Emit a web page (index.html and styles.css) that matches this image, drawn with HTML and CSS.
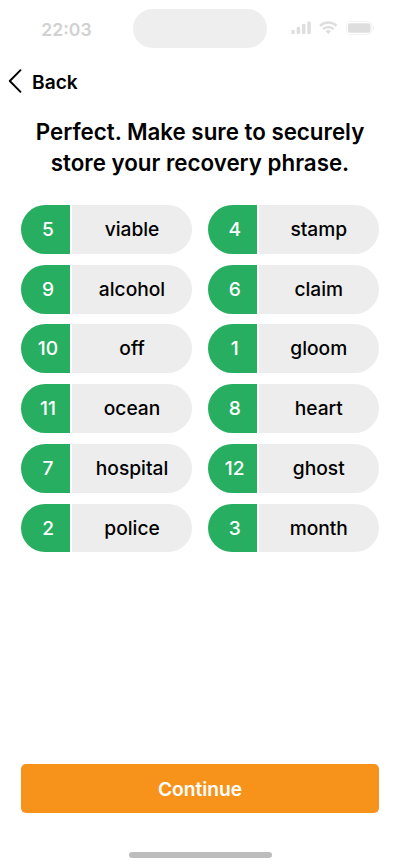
FILE: index.html
```html
<!DOCTYPE html>
<html lang="en">
<head>
<meta charset="utf-8">
<title>Recovery phrase</title>
<link rel="stylesheet" href="styles.css">
</head>
<body>
<div class="screen">
  <header class="status">
    <span class="time">22:03</span>
    <span class="island"></span>
    <svg class="signals" width="84" height="16" viewBox="0 0 84 16" fill="#dedede">
      <rect x="0.3" y="9" width="3.5" height="4" rx="1"/>
      <rect x="5.700" y="6" width="3.500" height="7" rx="1"/>
      <rect x="11" y="3" width="3.500" height="10" rx="1"/>
      <rect x="16.300" y="0.500" width="3.500" height="12.500" rx="1"/>
      <g fill="none" stroke="#dedede" stroke-width="2.400">
        <path d="M29 4.800a12 12 0 0 1 16.600 0"/>
        <path d="M32 8.200a7.700 7.700 0 0 1 10.600 0"/>
      </g>
      <path d="M37.300 13l-2.700-2.800a4 4 0 0 1 5.400 0z"/>
      <rect x="55.300" y="0.500" width="25.500" height="13" rx="3.900" fill="none" stroke="#f3f3f3"/>
      <rect x="57" y="2.300" width="22.500" height="9.500" rx="2.300"/>
      <path d="M81.800 5v4q1.400-.6 1.400-2t-1.400-2" fill="#f0f0f0"/>
    </svg>
  </header>
  <nav class="back">
    <svg width="14" height="26" viewBox="0 0 14 26"><path d="M12.500 1.200L1.800 12L12.500 22.800" fill="none" stroke="#000" stroke-width="1.900" stroke-linecap="round" stroke-linejoin="round"/></svg>
    <span>Back</span>
  </nav>
  <h1>Perfect. Make sure to securely<br>store your recovery phrase.</h1>
  <main class="words">
    <div class="word"><b>5</b><span>viable</span></div><div class="word"><b>4</b><span>stamp</span></div>
    <div class="word"><b>9</b><span>alcohol</span></div><div class="word"><b>6</b><span>claim</span></div>
    <div class="word"><b>10</b><span>off</span></div><div class="word"><b>1</b><span>gloom</span></div>
    <div class="word"><b>11</b><span>ocean</span></div><div class="word"><b>8</b><span>heart</span></div>
    <div class="word"><b>7</b><span>hospital</span></div><div class="word"><b>12</b><span>ghost</span></div>
    <div class="word"><b>2</b><span>police</span></div><div class="word"><b>3</b><span>month</span></div>
  </main>
  <button class="continue">Continue</button>
  <div class="home"></div>
</div>
</body>
</html>
```
FILE: styles.css
```css
* { box-sizing: border-box; }
body { margin: 0; background: #fff; font-family: Inter, sans-serif; color: #000; }
.screen { width: 400px; height: 866px; display: flex; flex-direction: column; overflow: hidden; }
.status { height: 48px; padding: 8.500px 25px 0 41.300px; display: grid; grid-template-columns: 92px 133.400px 1fr; flex: none; }
.time { font-size: 17.600px; line-height: 41px; font-weight: 600; color: #d2d2d2; }
.island { height: 39.300px; border-radius: 20px; background: #eee; }
.signals { justify-self: end; margin-top: 12.500px; }
.back { display: flex; align-items: center; gap: 10px; height: 26px; margin: 21px 0 0 8px; font-size: 19.200px; font-weight: 600; flex: none; line-height: 26px; }
.back svg { flex: none; }
h1 { margin: 21px 0 0; font-size: 22.340px; line-height: 31px; font-weight: 600; text-align: center; }
.words { margin: 27px 21.300px 0; display: grid; grid-template-columns: 170.700px 170.700px; justify-content: space-between; row-gap: 10.830px; }
.word { height: 48.900px; display: grid; grid-template-columns: 49px 1fr; gap: 1.800px; border-radius: 25px; overflow: hidden; font-size: 19.200px; font-weight: 500; line-height: 49px; text-align: center; }
.word b { padding-left: 4.500px; background: #27ae60; color: #fff; font-weight: 450; }
.word span { background: #ededed; }
.continue { margin: auto 21.300px 39px; height: 49px; flex: none; border: 0; border-radius: 5px; background: #f7931a; color: #fff; font: 600 19.200px Inter, sans-serif; }
.home { width: 143px; height: 5.500px; border-radius: 3px; background: #bdbdbd; margin: 0 auto 8.500px; flex: none; }
```
